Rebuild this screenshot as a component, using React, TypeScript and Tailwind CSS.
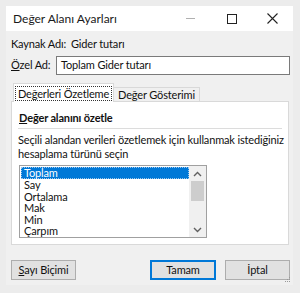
import React from "react";

const items = ["Toplam", "Say", "Ortalama", "Mak", "Min", "Çarpım"];

const ChevUp = () => (
  <svg width="9" height="6" viewBox="0 0 9 6" fill="none" stroke="#606060" strokeWidth="1.4">
    <path d="M1 5 L4.5 1.5 L8 5" />
  </svg>
);

const ChevDown = () => (
  <svg width="9" height="6" viewBox="0 0 9 6" fill="none" stroke="#606060" strokeWidth="1.4">
    <path d="M1 1 L4.5 4.5 L8 1" />
  </svg>
);

const App = () => {
  return (
    <div
      className="w-[300px] h-[293px] bg-[#ececec] pt-[6px] pl-[6px] text-[11px] text-[#111] whitespace-nowrap tracking-[-0.15px]"
      style={{ fontFamily: 'Lato, "Noto Sans", sans-serif' }}
    >
      <div className="w-[287px] h-[279px] bg-[#f0f0f0] flex flex-col relative">
        {/* title bar */}
        <div className="h-[25px] bg-white flex items-center">
          <span className="ml-[7px] text-[12px] text-[#1a1a1a] tracking-normal">Değer Alanı Ayarları</span>
          <div className="ml-auto flex items-center h-full">
            <div className="w-[36px] flex justify-center">
              <div className="w-[9px] h-px bg-[#b0b0b0]" />
            </div>
            <div className="w-[36px] flex justify-center ml-[6px]">
              <div className="w-[10px] h-[10px] border border-[#222]" />
            </div>
            <div className="w-[36px] flex justify-center ml-[4px] mr-[3px]">
              <svg width="11" height="11" viewBox="0 0 11 11" stroke="#222" strokeWidth="1.1">
                <path d="M0.5 0.5 L10.5 10.5 M10.5 0.5 L0.5 10.5" />
              </svg>
            </div>
          </div>
        </div>

        {/* source name */}
        <div className="flex items-center h-[14px] mt-[6px] ml-[5px]">
          <span className="w-[60px]">Kaynak Adı:</span>
          <span>Gider tutarı</span>
        </div>

        {/* custom name */}
        <div className="flex items-center mt-[5px] ml-[5px]">
          <span className="w-[45px]">
            <span className="underline">Ö</span>zel Ad:
          </span>
          <div className="w-[234px] h-[19px] bg-white border border-[#7a7a7a] flex items-center pl-[4px]">
            Toplam Gider tutarı
          </div>
        </div>

        {/* tabs */}
        <div className="flex items-end ml-[7px] mt-[8px] h-[19px]">
          <div className="w-[101px] h-[19px] bg-white border border-[#d9d9d9] border-b-0 flex items-center justify-center relative z-10">
            <span className="border border-dotted border-[#333] px-[2px] leading-[13px]">Değerleri Özetleme</span>
          </div>
          <div className="w-[86px] h-[15px] bg-[#f0f0f0] border border-[#d9d9d9] border-l-0 border-b-0 flex items-center justify-center">
            Değer Gösterimi
          </div>
        </div>

        {/* panel */}
        <div className="ml-[5px] w-[278px] h-[144px] -mt-px bg-white border border-[#d9d9d9] px-[6px] pt-[9px]">
          <div className="font-bold leading-[14px] ml-px">
            <span className="underline">D</span>eğer alanını özetle
          </div>
          <div className="h-px bg-[#dcdcdc] mt-[3px]" />
          <div className="leading-[14px] mt-[4px]">
            <div>Seçili alandan verileri özetlemek için kullanmak istediğiniz</div>
            <div>hesaplama türünü seçin</div>
          </div>
          <div className="mt-[4px] w-[188px] h-[73px] border border-[#a0a0a0] flex ml-px">
            <div className="flex-1 pt-px pl-px">
              {items.map((it, i) => (
                <div
                  key={it}
                  className={
                    i === 0
                      ? "h-[12px] leading-[10px] bg-[#0078d7] text-white pl-[2px] border border-dotted border-[#9cc7ec]"
                      : "h-[11.5px] leading-[11.5px] pl-[3px]"
                  }
                >
                  {it}
                </div>
              ))}
            </div>
            <div className="w-[17px] bg-[#f0f0f0] flex flex-col items-center">
              <div className="h-[15px] flex items-center justify-center">
                <ChevUp />
              </div>
              <div className="w-[13px] h-[20px] bg-[#cdcdcd]" />
              <div className="flex-1" />
              <div className="h-[15px] flex items-center justify-center">
                <ChevDown />
              </div>
            </div>
          </div>
        </div>

        {/* buttons */}
        <div className="flex items-center mt-[15px] ml-[5px]">
          <div className="w-[65px] h-[20px] bg-[#e1e1e1] border border-[#adadad] flex items-center justify-center">
            <span>
              <span className="underline">S</span>ayı Biçimi
            </span>
          </div>
          <div className="w-[66px] h-[20px] bg-[#e1e1e1] border-2 border-[#0078d7] flex items-center justify-center ml-[74px]">
            Tamam
          </div>
          <div className="w-[65px] h-[20px] bg-[#e1e1e1] border border-[#adadad] flex items-center justify-center ml-[9px]">
            İptal
          </div>
        </div>

        {/* resize grip */}
        <svg className="absolute right-[2px] bottom-[2px]" width="6" height="6" viewBox="0 0 6 6">
          <rect x="4" y="0" width="1" height="1" fill="#999" />
          <rect x="2" y="2" width="1" height="1" fill="#999" />
          <rect x="4" y="2" width="1" height="1" fill="#999" />
          <rect x="0" y="4" width="1" height="1" fill="#999" />
          <rect x="2" y="4" width="1" height="1" fill="#999" />
          <rect x="4" y="4" width="1" height="1" fill="#999" />
        </svg>
      </div>
    </div>
  );
};

export default App;
